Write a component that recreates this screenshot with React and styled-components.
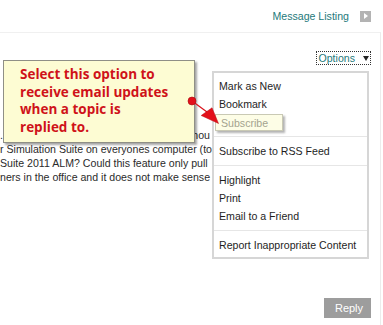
import styled, { createGlobalStyle } from 'styled-components'

const GlobalStyle = createGlobalStyle`
  body{margin:0;background:#fff;font-family:"Liberation Sans",Arial,sans-serif;}
  *{box-sizing:border-box;}
`

const TopBar = styled.div`
  height:32px;display:flex;justify-content:flex-end;align-items:center;
  padding-right:12px;gap:11px;
`
const ListingLink = styled.a`
  font-size:10.6px;color:#25797a;text-decoration:none;cursor:pointer;
`
const NextIcon = styled.span`
  width:11px;height:11px;background:#b3b3b3;display:flex;align-items:center;justify-content:center;
  &:after{content:'';border-left:4px solid #fff;border-top:3px solid transparent;border-bottom:3px solid transparent;margin-left:1px}
`
const Panel = styled.div`
  position:relative;height:calc(100vh - 32px);width:381px;
  border-top:1px solid #f0f0f0;border-right:1px solid #ececec;
  display:flex;flex-direction:column;padding:18px 9px 7px 0;
`
const OptionsRow = styled.div`display:flex;justify-content:flex-end;`
const OptionsToggle = styled.button`
  display:flex;align-items:center;height:14px;padding:0 1px;
  border:1px dotted #333;background:#fff;cursor:pointer;
  font-family:inherit;font-size:10.6px;line-height:12px;color:#25797a;
`
const Caret = styled.span`
  margin-left:8px;margin-top:1px;border-top:5px solid #222;border-left:3.5px solid transparent;border-right:3.5px solid transparent;
`
const PostBody = styled.div`
  margin-top:63px;width:212px;overflow:hidden;
  font-size:10.6px;line-height:14px;color:#2b2b2b;white-space:nowrap;
`
const PostLine = styled.div`display:flex;`
const Lead = styled.span`flex:1;min-width:0;overflow:hidden;`
const Tail = styled.span`padding-right:2px;`
const Footer = styled.div`margin-top:auto;display:flex;justify-content:flex-end;`
const ReplyButton = styled.button`
  width:47px;height:20px;border:0;background:#9d9d9d;color:#fff;
  font-family:inherit;font-size:11px;padding:0 0 0 3px;cursor:pointer;
`
const OptionsMenu = styled.ul`
  position:absolute;left:212px;top:38px;width:157px;margin:0;
  list-style:none;padding:4px 0 3px;background:#fff;border:2px solid #d6d6d6;z-index:2;
`
const MenuItem = styled.li`
  height:18px;line-height:18px;padding-left:5px;font-size:10.6px;color:${p=>p.$muted?'#a4a38f':'#1e1e1e'};
  cursor:pointer;
`
const Highlight = styled.span`
  display:inline-block;height:17px;line-height:16px;margin:1px 0 0 -4px;padding:0 14px 0 5px;
  background:#fdfde6;border:1px solid #c9c9b4;box-shadow:2px 2px 2px rgba(0,0,0,.3);
`
const Separator = styled.li`height:1px;background:#e6e6e6;margin:5px 0;`
const Callout = styled.div`
  position:absolute;left:3px;top:27px;width:192px;height:83px;z-index:3;
  background:#fdfcd3;border:1px solid #8f8f86;box-shadow:2px 2px 2px rgba(0,0,0,.35);
  padding:5px 0 0 16px;
  font-family:"Open Sans","DejaVu Sans",sans-serif;font-weight:700;font-size:13.5px;line-height:17.5px;color:#cf1219;
`
const Pointer = styled.svg`position:absolute;left:186px;top:61px;z-index:4;overflow:visible;`

const lines = [
  ['.', ' so we were wondering if there was a way to stop it. Why', ' shou'],
  ['r Simulation Suite on everyones computer (to run the'],
  ['Suite 2011 ALM? Could this feature only pull'],
  ['ners in the office and it does not make sense to']
]

export default function App(){
  return(
    <>
      <GlobalStyle />
      <TopBar>
        <ListingLink>Message Listing</ListingLink>
        <NextIcon />
      </TopBar>
      <Panel>
        <OptionsRow>
          <OptionsToggle>Options<Caret /></OptionsToggle>
        </OptionsRow>
        <PostBody>
          {lines.map((l,i)=>l.length>1?(
            <PostLine key={i}><Lead>{l[0]}{l[1]}</Lead><Tail>{l[2]}</Tail></PostLine>
          ):(
            <PostLine key={i}>{l[0]}</PostLine>
          ))}
        </PostBody>
        <Footer><ReplyButton>Reply</ReplyButton></Footer>
        <OptionsMenu>
          <MenuItem>Mark as New</MenuItem>
          <MenuItem>Bookmark</MenuItem>
          <MenuItem $muted><Highlight>Subscribe</Highlight></MenuItem>
          <Separator />
          <MenuItem>Subscribe to RSS Feed</MenuItem>
          <Separator />
          <MenuItem>Highlight</MenuItem>
          <MenuItem>Print</MenuItem>
          <MenuItem>Email to a Friend</MenuItem>
          <Separator />
          <MenuItem>Report Inappropriate Content</MenuItem>
        </OptionsMenu>
        <Callout>
          Select this option to<br />
          receive email updates<br />
          when a topic is<br />
          replied to.
        </Callout>
        <Pointer width="36" height="34" viewBox="0 0 36 34">
          <line x1="6" y1="7" x2="21" y2="18" stroke="#d9121b" strokeWidth="1.2" />
          <polygon points="15.2,21.5 26,13.8 32.5,29.5" fill="#e3101a" stroke="#b80d14" strokeWidth="0.5" />
          <circle cx="6" cy="7" r="4" fill="#e3101a" stroke="#a80c12" strokeWidth="0.6" />
        </Pointer>
      </Panel>
    </>
  )
}
